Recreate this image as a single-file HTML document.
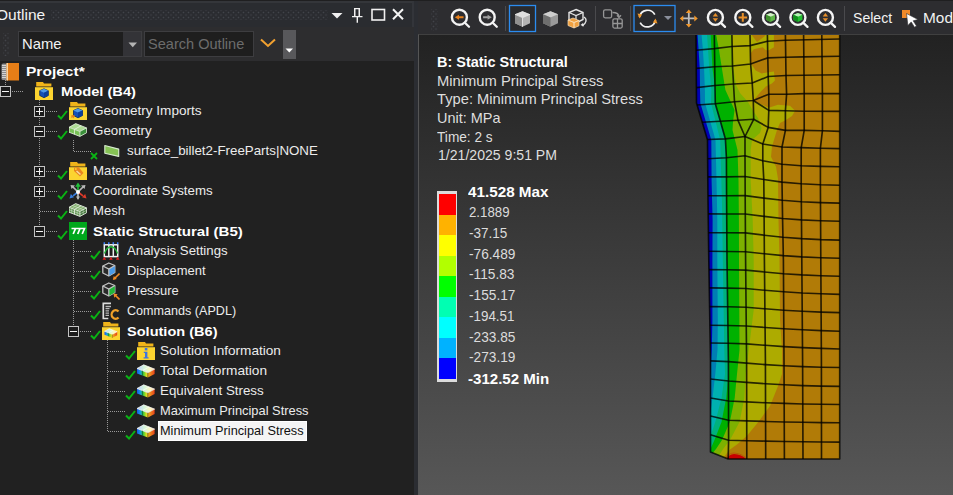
<!DOCTYPE html>
<html><head><meta charset="utf-8"><title>Mechanical</title>
<style>
*{box-sizing:border-box;margin:0;padding:0}
html,body{width:953px;height:495px;overflow:hidden;background:#2d2d30;font-family:"Liberation Sans",sans-serif;color:#f0f0f0}
#app{position:relative;width:953px;height:495px;overflow:hidden;background:#2d2d30}
.abs{position:absolute}
#topstrip{left:0;top:0;width:953px;height:1.500px;background:#1f1f20}
#ltitle{left:0;top:1px;width:414px;height:26px;background:#2a2c30;border-right:2px solid #33353a;border-top:2.500px solid #34363a}
#lfilter{left:0;top:27px;width:414px;height:34px;background:#2d2d2f}
#tree{left:0;top:61px;width:414px;height:434px;background:#212121}
#split{left:414px;top:1px;width:4px;height:493px;background:#2b2d32}
#toolbar{left:418px;top:1px;width:535px;height:33px;background:#2d2d30}
#view{left:418px;top:34px;width:535px;height:461px;background:linear-gradient(#222222,#575757);border-left:1px solid #555555;border-top:1px solid #404040}
.grip{background-image:radial-gradient(circle,#42444a 0.7px,transparent 1.1px),radial-gradient(circle,#42444a 0.7px,transparent 1.1px);background-size:5px 5px;background-position:0 0,2.500px 2.500px}
#outl{left:-3px;top:6px;font-size:13.500px;color:#f2f2f2;letter-spacing:0.100px}
.combo{position:absolute;top:31px;height:26px;background:#1e1e1e;border:1px solid #3d3d40}
.vd{position:absolute;width:1px;background-image:linear-gradient(#9a9a9a 50%,transparent 50%);background-size:1px 2px}
.hd{position:absolute;height:1px;background-image:linear-gradient(90deg,#9a9a9a 50%,transparent 50%);background-size:2px 1px}
.exp{position:absolute;width:11px;height:11px;border:1px solid #c4c4c4;background:#1b1b1b}
.exp i{position:absolute;left:1px;top:4px;width:7px;height:1px;background:#f4f4f4}
.exp b{position:absolute;left:4px;top:1px;width:1px;height:7px;background:#f4f4f4}
.chk{position:absolute}
.ico{position:absolute;width:19px;height:19px}
.t{position:absolute;height:20px;line-height:20px;font-size:13px;color:#ececec;white-space:nowrap;transform-origin:0 50%}
.t.b{font-weight:bold;color:#ffffff}
.t.sel{color:#101010}
.selbox{position:absolute;background:#f4f4f4;border:1px solid #ffffff}
.lg{position:absolute;left:438px;font-size:13px;white-space:nowrap;color:#ebebeb;line-height:16px}
.lgbar{position:absolute;left:437px;top:191.400px;width:19.500px;height:190.500px;background:#dcdcdc;padding:3px 1px 3px 1.500px}
.lgbar i{display:block;width:17px;height:20.500px}
.lt{position:absolute;left:468px;font-size:12.500px;color:#e8e8e8;white-space:nowrap;line-height:16px}
.lt.b{font-weight:bold;color:#ffffff;font-size:13px}
.tb{position:absolute;top:0;left:0}
.tx{position:absolute;height:20px;line-height:20px;white-space:nowrap;transform-origin:0 50%}
</style></head><body><div id="app">
<div id="topstrip" class="abs"></div>
<div id="ltitle" class="abs"></div>
<div id="lfilter" class="abs"></div>
<div id="tree" class="abs"></div>
<div id="split" class="abs"></div>
<div id="toolbar" class="abs"></div>
<div id="view" class="abs"></div>

<!-- left title -->
<div class="abs grip" style="left:51px;top:10px;width:277px;height:10px"></div>
<svg class="abs" style="left:328px;top:4px" width="84" height="22" viewBox="0 0 84 22">
 <path d="M3.500 9h11l-5.500 5.500z" fill="#f0f0f0"/>
 <path d="M26 4h6v8h2.500v1.300h-4.500v5.500h-1.400v-5.500h-4.600v-1.300h2z M27.500 5.300v6.700h3v-6.700z" fill="#f0f0f0" fill-rule="evenodd"/>
 <rect x="44" y="5.500" width="12.500" height="10.500" fill="none" stroke="#f0f0f0" stroke-width="1.600"/>
 <path d="M65 5.200l10 10M75 5.200l-10 10" stroke="#f4f4f4" stroke-width="2" fill="none"/>
</svg>

<!-- filter row -->
<div class="abs grip" style="left:3px;top:33px;width:6px;height:23px"></div>
<div class="combo" style="left:18px;width:124px"><div class="abs" style="right:0;top:0;width:18px;height:24px;background:#333337"></div></div>
<svg class="abs" style="left:128px;top:41.500px" width="10" height="6"><path d="M0.500 0.500h8.500l-4.250 4.700z" fill="#b4b4b4"/></svg>
<div class="combo" style="left:144px;width:110px"></div>
<svg class="abs" style="left:259px;top:37px" width="20" height="12"><path d="M2 2.500l7 6.500 7-6.500" fill="none" stroke="#f2a130" stroke-width="2"/></svg>
<div class="abs" style="left:283px;top:30px;width:13px;height:29px;background:#58585b"></div>
<svg class="abs" style="left:285px;top:48px" width="9" height="5"><path d="M0.500 0.500h7.500l-3.750 4z" fill="#ffffff"/></svg>

<!-- tree -->
<div class="vd" style="left:5px;top:80px;height:6px"></div>
<div class="vd" style="left:39px;top:100px;height:126px"></div>
<div class="vd" style="left:73px;top:140px;height:11px"></div>
<div class="vd" style="left:73px;top:240px;height:86px"></div>
<div class="vd" style="left:107px;top:340px;height:91px"></div>
<div class="ico" style="left:0.5px;top:62px"><svg width="19" height="19" viewBox="0 0 19 19"><rect x="0.500" y="1.500" width="5.500" height="16.500" rx="1.500" fill="#8c8c8c"/><path d="M1 3.500h4M1 5.500h4M1 7.500h4M1 9.500h4M1 11.500h4M1 13.500h4M1 15.500h4" stroke="#dcdcdc" stroke-width="0.900"/><rect x="5.500" y="1" width="12.500" height="17.500" fill="#e67e17"/><rect x="5.500" y="1" width="1.400" height="17.500" fill="#f7dcb4"/></svg></div>
<div class="tx " style="left:26.00px;top:61.50px;font-size:13px;color:#ffffff;transform:scaleX(1.1945);font-weight:bold">Project*</div>
<div class="exp" style="left:0px;top:86px"><i></i></div>
<div class="hd" style="left:12px;top:91px;width:12px"></div>
<div class="ico" style="left:34.8px;top:82px"><svg width="18" height="18" viewBox="0 0 18 18"><path d="M1.200 0h6.800l1 1.400h7.400v3.200h-15.200z" fill="#f0b41a"/><path d="M0 5.200h18v12.800h-18z" fill="#fcd430"/><path d="M9 6.800l4.300 1.900v4.800l-4.300 2.200-4.300-2.200v-4.800z" fill="#1550b8" stroke="#0a2a5a" stroke-width="0.800"/><path d="M9 6.800l4.300 1.900-4.300 2-4.300-2z" fill="#4e9ae8"/><path d="M9 10.700v5l4.300-2.200v-4.800z" fill="#0c3f9a"/></svg></div>
<div class="tx " style="left:60.50px;top:81.50px;font-size:13px;color:#ffffff;transform:scaleX(1.1286);font-weight:bold">Model (B4)</div>
<div class="exp" style="left:34px;top:106px"><i></i><b></b></div>
<div class="hd" style="left:46px;top:111px;width:12px"></div>
<svg class="chk" style="left:56.8px;top:110px" width="11" height="10" viewBox="0 0 11 10"><path d="M1 5.500l3 3 6-7.500" fill="none" stroke="#0ab414" stroke-width="2"/></svg>
<div class="ico" style="left:68.8px;top:102px"><svg width="18" height="18" viewBox="0 0 18 18"><path d="M1.200 0h6.800l1 1.400h7.400v3.200h-15.200z" fill="#f0b41a"/><path d="M0 5.200h18v12.800h-18z" fill="#fcd430"/><path d="M9 6.500l4.500 2v5l-4.500 2.300-4.500-2.300v-5z" fill="#1550b8" stroke="#0a2a5a" stroke-width="0.800"/><path d="M9 6.500l4.500 2-4.500 2.100-4.500-2.100z" fill="#4e9ae8"/><path d="M9 10.600v5.200l4.500-2.300v-5z" fill="#0c3f9a"/><path d="M2.500 13l3.500.500-1.500 3-.800-1.300-1.500.800z" fill="#e8841a"/></svg></div>
<div class="tx " style="left:93.00px;top:101.40px;font-size:13px;color:#ececec;transform:scaleX(1.0439)">Geometry Imports</div>
<div class="exp" style="left:34px;top:126px"><i></i></div>
<div class="hd" style="left:46px;top:131px;width:12px"></div>
<svg class="chk" style="left:56.8px;top:130px" width="11" height="10" viewBox="0 0 11 10"><path d="M1 5.500l3 3 6-7.500" fill="none" stroke="#0ab414" stroke-width="2"/></svg>
<div class="ico" style="left:68.8px;top:122px"><svg width="18" height="18" viewBox="0 0 18 18"><path d="M0 5.300l6.700-3.700 10.900 4.300-6.700 3.600z" fill="#addc94"/><path d="M0 5.300l10.900 4.200v4.900l-10.900-4.200z" fill="#78c256"/><path d="M10.900 9.500l6.700-3.600v4.900l-6.700 3.600z" fill="#3a8f3a"/><path d="M0 5.300l6.700-3.700 10.900 4.300-6.700 3.600zM0 5.300v4.900l10.900 4.200 6.700-3.600v-4.900M10.900 9.500v4.900M5.450 7.400l6.700-3.650M5.450 7.400v4.900" fill="none" stroke="#ecf7e6" stroke-width="0.8" stroke-linejoin="round"/></svg></div>
<div class="tx " style="left:93.00px;top:121.40px;font-size:13px;color:#ececec;transform:scaleX(1.0284)">Geometry</div>
<div class="hd" style="left:74px;top:151px;width:18px"></div>
<svg class="chk" style="left:90.4px;top:152px" width="9" height="9" viewBox="0 0 9 9"><path d="M1 1l6 6M7 1l-6 6" fill="none" stroke="#0ab414" stroke-width="1.800"/></svg>
<div class="ico" style="left:102.4px;top:142px"><svg width="18" height="18" viewBox="0 0 18 18"><path d="M2.800 3.500l13.900 3.600v7.300l-13.900-3.100z" fill="#86c255" stroke="#d7ead0" stroke-width="1.100" stroke-linejoin="round"/></svg></div>
<div class="tx " style="left:127.00px;top:141.40px;font-size:13px;color:#ececec;transform:scaleX(1.0254)">surface_billet2-FreeParts|NONE</div>
<div class="exp" style="left:34px;top:166px"><i></i><b></b></div>
<div class="hd" style="left:46px;top:171px;width:12px"></div>
<svg class="chk" style="left:56.8px;top:170px" width="11" height="10" viewBox="0 0 11 10"><path d="M1 5.500l3 3 6-7.500" fill="none" stroke="#0ab414" stroke-width="2"/></svg>
<div class="ico" style="left:68.8px;top:162px"><svg width="18" height="18" viewBox="0 0 18 18"><path d="M1.200 0h6.800l1 1.400h7.400v3.200h-15.200z" fill="#f0b41a"/><path d="M0 5.200h18v12.800h-18z" fill="#fcd430"/><path d="M5 5.500l4.500-.5 5 6-3.500 3.500-6-5.500z" fill="#e8871e"/><path d="M7.500 9l4 3.500" stroke="#f9d9a0" stroke-width="1.600"/><circle cx="6.800" cy="7" r="1" fill="#fbd12c"/></svg></div>
<div class="tx " style="left:93.00px;top:161.40px;font-size:13px;color:#ececec;transform:scaleX(1.0180)">Materials</div>
<div class="exp" style="left:34px;top:186px"><i></i><b></b></div>
<div class="hd" style="left:46px;top:191px;width:12px"></div>
<svg class="chk" style="left:56.8px;top:190px" width="11" height="10" viewBox="0 0 11 10"><path d="M1 5.500l3 3 6-7.500" fill="none" stroke="#0ab414" stroke-width="2"/></svg>
<div class="ico" style="left:68.8px;top:182px"><svg width="18" height="18" viewBox="0 0 18 18"><path d="M9 10L3.500 4.500M9 10l5.500-5.500M9 10v6.500" stroke="#b8b8b8" stroke-width="1.700"/><path d="M1.500 3l4.500.500-3.500 3.500zM16.500 3l-4.500.500 3.500 3.500zM9 18l-2-3.500h4z" fill="#b8b8b8"/><path d="M9 10V4" stroke="#22c23a" stroke-width="1.600"/><path d="M9 0.500l2.800 4.200h-5.600z" fill="#22c23a"/><path d="M9 10l-5 3.800" stroke="#3a7fe0" stroke-width="1.600"/><path d="M0.500 16.500l1.300-4.500 3.200 3.300z" fill="#3a7fe0"/><path d="M9 10l5 3.800" stroke="#e03a2a" stroke-width="1.600"/><path d="M17.500 16.500l-1.300-4.500-3.200 3.300z" fill="#e03a2a"/><circle cx="9" cy="10" r="2" fill="#ffffff"/></svg></div>
<div class="tx " style="left:93.00px;top:181.40px;font-size:13px;color:#ececec;transform:scaleX(1.0217)">Coordinate Systems</div>
<div class="hd" style="left:40px;top:211px;width:18px"></div>
<svg class="chk" style="left:56.8px;top:210px" width="11" height="10" viewBox="0 0 11 10"><path d="M1 5.500l3 3 6-7.500" fill="none" stroke="#0ab414" stroke-width="2"/></svg>
<div class="ico" style="left:68.8px;top:202px"><svg width="18" height="18" viewBox="0 0 18 18"><path d="M0 5.300l6.700-3.700 10.900 4.300-6.700 3.600z" fill="#7fae6a"/><path d="M0 5.300l10.900 4.200v4.900l-10.900-4.200z" fill="#5f9450"/><path d="M10.900 9.500l6.700-3.600v4.900l-6.700 3.600z" fill="#3f7338"/><path d="M0 5.300l6.700-3.700 10.900 4.300-6.700 3.600zM0 5.300v4.900l10.900 4.200 6.700-3.600v-4.900M10.900 9.500v4.900M5.450 7.400l6.700-3.650M5.450 7.400v4.900" fill="none" stroke="#e6efe2" stroke-width="0.9" stroke-linejoin="round"/><path d="M2.700 6.400l6.700-3.700M8.200 8.500l6.700-3.700M3.300 3.500l10.900 4.200M0 7.700l10.900 4.200 6.700-3.600M2.700 6.400v4.900M8.200 8.500v4.900M14.200 7.700v4.900" stroke="#dbe8d4" stroke-width="0.500" fill="none"/></svg></div>
<div class="tx " style="left:93.00px;top:201.40px;font-size:13px;color:#ececec;transform:scaleX(1.0064)">Mesh</div>
<div class="exp" style="left:34px;top:226px"><i></i></div>
<div class="hd" style="left:46px;top:231px;width:12px"></div>
<svg class="chk" style="left:56.8px;top:230px" width="11" height="10" viewBox="0 0 11 10"><path d="M1 5.500l3 3 6-7.500" fill="none" stroke="#0ab414" stroke-width="2"/></svg>
<div class="ico" style="left:68.8px;top:222px"><svg width="18" height="18" viewBox="0 0 18 18"><rect x="0" y="0" width="18" height="18" fill="#00a81c"/><path d="M2.500 6.500h4l-2.300 5.500M7 6.500h4l-2.300 5.500M11.500 6.500h4l-2.300 5.500" stroke="#fff" stroke-width="1.700" fill="none"/></svg></div>
<div class="tx " style="left:93.00px;top:221.50px;font-size:13px;color:#ffffff;transform:scaleX(1.1592);font-weight:bold">Static Structural (B5)</div>
<div class="hd" style="left:74px;top:251px;width:18px"></div>
<svg class="chk" style="left:90.4px;top:250px" width="11" height="10" viewBox="0 0 11 10"><path d="M1 5.500l3 3 6-7.500" fill="none" stroke="#0ab414" stroke-width="2"/></svg>
<div class="ico" style="left:102.4px;top:242px"><svg width="18" height="18" viewBox="0 0 18 18"><rect x="2.300" y="2.800" width="13.400" height="11.800" fill="#1c1c1c" stroke="#f0f0f0" stroke-width="1.500"/><path d="M6.800 2.800v11.800M11.300 2.800v11.800" stroke="#f0f0f0" stroke-width="1.500"/><path d="M2.500 11.500c3-9 10-9 13 0" fill="none" stroke="#22b83a" stroke-width="1.300"/><path d="M2.300 0.300v2M6.800 0.300v2M11.300 0.300v2M15.700 0.300v2" stroke="#3a7fff" stroke-width="1.500"/><path d="M2.300 14.800l-1.800 3h3.600zM9 14.800l-1.800 3h3.600zM15.700 14.800l-1.800 3h3.600z" fill="#e02020"/></svg></div>
<div class="tx " style="left:127.00px;top:241.40px;font-size:13px;color:#ececec;transform:scaleX(1.0162)">Analysis Settings</div>
<div class="hd" style="left:74px;top:271px;width:18px"></div>
<svg class="chk" style="left:90.4px;top:270px" width="11" height="10" viewBox="0 0 11 10"><path d="M1 5.500l3 3 6-7.500" fill="none" stroke="#0ab414" stroke-width="2"/></svg>
<div class="ico" style="left:102.4px;top:262px"><svg width="18" height="18" viewBox="0 0 18 18"><path d="M0.800 4l6-3 6 2.500v7l-6 3.500-6-3z" fill="#2a2a2a" stroke="#c4c4c4" stroke-width="1.300" stroke-linejoin="round"/><path d="M6.800 7v7l6-3.500v-7z" fill="#4a9ae8"/><path d="M0.800 4l6 3 6-3.500M6.800 7v7" fill="none" stroke="#c4c4c4" stroke-width="1.200"/><path d="M17.500 11.500l-5.500 5.500" stroke="#f08a24" stroke-width="1.600"/><path d="M10.800 18l1-4 3 3z" fill="#f08a24"/></svg></div>
<div class="tx " style="left:127.00px;top:261.40px;font-size:13px;color:#ececec;transform:scaleX(0.9979)">Displacement</div>
<div class="hd" style="left:74px;top:291px;width:18px"></div>
<svg class="chk" style="left:90.4px;top:290px" width="11" height="10" viewBox="0 0 11 10"><path d="M1 5.500l3 3 6-7.500" fill="none" stroke="#0ab414" stroke-width="2"/></svg>
<div class="ico" style="left:102.4px;top:282px"><svg width="18" height="18" viewBox="0 0 18 18"><path d="M0.800 4l6-3 6 2.500v7l-6 3.500-6-3z" fill="#2a2a2a" stroke="#c4c4c4" stroke-width="1.300" stroke-linejoin="round"/><path d="M6.800 7v7l6-3.500v-7z" fill="#22b83a"/><path d="M0.800 4l6 3 6-3.500M6.800 7v7" fill="none" stroke="#c4c4c4" stroke-width="1.200"/><path d="M17.500 17.500l-4.500-4.500" stroke="#f08a24" stroke-width="1.600"/><path d="M11.500 11.500l4.200.800-3.400 3.400z" fill="#f08a24"/></svg></div>
<div class="tx " style="left:127.00px;top:281.40px;font-size:13px;color:#ececec;transform:scaleX(0.9936)">Pressure</div>
<div class="hd" style="left:74px;top:311px;width:18px"></div>
<svg class="chk" style="left:90.4px;top:310px" width="11" height="10" viewBox="0 0 11 10"><path d="M1 5.500l3 3 6-7.500" fill="none" stroke="#0ab414" stroke-width="2"/></svg>
<div class="ico" style="left:102.4px;top:302px"><svg width="18" height="18" viewBox="0 0 18 18"><path d="M9 1.300h-7.700v15.200h5" fill="none" stroke="#dcdcdc" stroke-width="1.700"/><path d="M3.500 4.500h5.500M3.500 6.700h4M3.500 8.900h3.500M3.500 11.100h3.500M3.500 13.300h3.500" stroke="#b8b8b8" stroke-width="1.300"/><path d="M16.500 9.500a4 4.300 0 1 0 0 6" fill="none" stroke="#f0a028" stroke-width="2.300"/></svg></div>
<div class="tx " style="left:127.00px;top:301.40px;font-size:13px;color:#ececec;transform:scaleX(0.9680)">Commands (APDL)</div>
<div class="exp" style="left:68px;top:326px"><i></i></div>
<div class="hd" style="left:80px;top:331px;width:12px"></div>
<svg class="chk" style="left:90.4px;top:330px" width="11" height="10" viewBox="0 0 11 10"><path d="M1 5.500l3 3 6-7.500" fill="none" stroke="#0ab414" stroke-width="2"/></svg>
<div class="ico" style="left:102.4px;top:322px"><svg width="18" height="18" viewBox="0 0 18 18"><path d="M1.200 0h6.800l1 1.400h7.400v3.200h-15.200z" fill="#f0b41a"/><path d="M0 5.200h18v12.800h-18z" fill="#fcd430"/><g transform="translate(2.500,5.500) scale(0.72)"><defs><linearGradient id="rg" x1="0" x2="1" y1="0" y2="0"><stop offset="0" stop-color="#1a4fe8"/><stop offset="0.300" stop-color="#12a0e8"/><stop offset="0.550" stop-color="#2cc83a"/><stop offset="0.850" stop-color="#d8e020"/><stop offset="1" stop-color="#f0d020"/></linearGradient><linearGradient id="rg2" x1="0" x2="1" y1="0" y2="0"><stop offset="0" stop-color="#f0b020"/><stop offset="1" stop-color="#e8401a"/></linearGradient><linearGradient id="rg3" x1="0" x2="1" y1="0" y2="0"><stop offset="0" stop-color="#b8d0ff"/><stop offset="0.450" stop-color="#d8f8d8"/><stop offset="0.750" stop-color="#fff8c0"/><stop offset="1" stop-color="#ffd0a8"/></linearGradient></defs><path d="M0 5.300l10.900 4.200v4.900l-10.900-4.200z" fill="url(#rg)"/><path d="M10.900 9.500l6.700-3.600v4.900l-6.700 3.600z" fill="url(#rg2)"/><path d="M0 5.300l6.700-3.700 10.900 4.300-6.700 3.600z" fill="url(#rg3)"/><path d="M0 5.300l6.700-3.700 10.900 4.300-6.700 3.600zM5.450 7.400l6.700-3.650" fill="none" stroke="#ffffff" stroke-width="0.700"/><path d="M10.900 9.500v4.900M5.450 7.400v4.900" stroke="#101010" stroke-opacity="0.600" stroke-width="0.700"/></g></svg></div>
<div class="tx " style="left:127.00px;top:321.50px;font-size:13px;color:#ffffff;transform:scaleX(1.1188);font-weight:bold">Solution (B6)</div>
<div class="hd" style="left:108px;top:351px;width:18px"></div>
<svg class="chk" style="left:124.6px;top:350px" width="11" height="10" viewBox="0 0 11 10"><path d="M1 5.500l3 3 6-7.500" fill="none" stroke="#0ab414" stroke-width="2"/></svg>
<div class="ico" style="left:136.6px;top:342px"><svg width="18" height="18" viewBox="0 0 18 18"><path d="M1.200 0h6.800l1 1.400h7.400v3.200h-15.200z" fill="#f0b41a"/><path d="M0 5.200h18v12.800h-18z" fill="#fcd430"/><rect x="7.800" y="6" width="2.600" height="2.400" fill="#3f74e0"/><path d="M6.800 9.800h3.600v5.500h1.200v1.200h-5v-1.200h1.400v-4.300h-1.200z" fill="#3f74e0"/></svg></div>
<div class="tx " style="left:160.30px;top:341.40px;font-size:13px;color:#ececec;transform:scaleX(1.0456)">Solution Information</div>
<div class="hd" style="left:108px;top:371px;width:18px"></div>
<svg class="chk" style="left:124.6px;top:370px" width="11" height="10" viewBox="0 0 11 10"><path d="M1 5.500l3 3 6-7.500" fill="none" stroke="#0ab414" stroke-width="2"/></svg>
<div class="ico" style="left:136.6px;top:362px"><svg width="18" height="18" viewBox="0 0 18 18"><g transform="translate(0,1.200)"><defs><linearGradient id="rg" x1="0" x2="1" y1="0" y2="0"><stop offset="0" stop-color="#1a4fe8"/><stop offset="0.300" stop-color="#12a0e8"/><stop offset="0.550" stop-color="#2cc83a"/><stop offset="0.850" stop-color="#d8e020"/><stop offset="1" stop-color="#f0d020"/></linearGradient><linearGradient id="rg2" x1="0" x2="1" y1="0" y2="0"><stop offset="0" stop-color="#f0b020"/><stop offset="1" stop-color="#e8401a"/></linearGradient><linearGradient id="rg3" x1="0" x2="1" y1="0" y2="0"><stop offset="0" stop-color="#b8d0ff"/><stop offset="0.450" stop-color="#d8f8d8"/><stop offset="0.750" stop-color="#fff8c0"/><stop offset="1" stop-color="#ffd0a8"/></linearGradient></defs><path d="M0 5.300l10.900 4.200v4.900l-10.900-4.200z" fill="url(#rg)"/><path d="M10.900 9.500l6.700-3.600v4.900l-6.700 3.600z" fill="url(#rg2)"/><path d="M0 5.300l6.700-3.700 10.900 4.300-6.700 3.600z" fill="url(#rg3)"/><path d="M0 5.300l6.700-3.700 10.900 4.300-6.700 3.600zM5.450 7.400l6.700-3.650" fill="none" stroke="#ffffff" stroke-width="0.700"/><path d="M10.900 9.500v4.900M5.450 7.400v4.900" stroke="#101010" stroke-opacity="0.600" stroke-width="0.700"/></g></svg></div>
<div class="tx " style="left:160.30px;top:361.40px;font-size:13px;color:#ececec;transform:scaleX(1.0501)">Total Deformation</div>
<div class="hd" style="left:108px;top:391px;width:18px"></div>
<svg class="chk" style="left:124.6px;top:390px" width="11" height="10" viewBox="0 0 11 10"><path d="M1 5.500l3 3 6-7.500" fill="none" stroke="#0ab414" stroke-width="2"/></svg>
<div class="ico" style="left:136.6px;top:382px"><svg width="18" height="18" viewBox="0 0 18 18"><g transform="translate(0,1.200)"><defs><linearGradient id="rg" x1="0" x2="1" y1="0" y2="0"><stop offset="0" stop-color="#1a4fe8"/><stop offset="0.300" stop-color="#12a0e8"/><stop offset="0.550" stop-color="#2cc83a"/><stop offset="0.850" stop-color="#d8e020"/><stop offset="1" stop-color="#f0d020"/></linearGradient><linearGradient id="rg2" x1="0" x2="1" y1="0" y2="0"><stop offset="0" stop-color="#f0b020"/><stop offset="1" stop-color="#e8401a"/></linearGradient><linearGradient id="rg3" x1="0" x2="1" y1="0" y2="0"><stop offset="0" stop-color="#b8d0ff"/><stop offset="0.450" stop-color="#d8f8d8"/><stop offset="0.750" stop-color="#fff8c0"/><stop offset="1" stop-color="#ffd0a8"/></linearGradient></defs><path d="M0 5.300l10.900 4.200v4.900l-10.900-4.200z" fill="url(#rg)"/><path d="M10.900 9.500l6.700-3.600v4.900l-6.700 3.600z" fill="url(#rg2)"/><path d="M0 5.300l6.700-3.700 10.900 4.300-6.700 3.600z" fill="url(#rg3)"/><path d="M0 5.300l6.700-3.700 10.900 4.300-6.700 3.600zM5.450 7.400l6.700-3.650" fill="none" stroke="#ffffff" stroke-width="0.700"/><path d="M10.900 9.500v4.900M5.450 7.400v4.900" stroke="#101010" stroke-opacity="0.600" stroke-width="0.700"/></g></svg></div>
<div class="tx " style="left:160.30px;top:381.40px;font-size:13px;color:#ececec;transform:scaleX(1.0250)">Equivalent Stress</div>
<div class="hd" style="left:108px;top:411px;width:18px"></div>
<svg class="chk" style="left:124.6px;top:410px" width="11" height="10" viewBox="0 0 11 10"><path d="M1 5.500l3 3 6-7.500" fill="none" stroke="#0ab414" stroke-width="2"/></svg>
<div class="ico" style="left:136.6px;top:402px"><svg width="18" height="18" viewBox="0 0 18 18"><g transform="translate(0,1.200)"><defs><linearGradient id="rg" x1="0" x2="1" y1="0" y2="0"><stop offset="0" stop-color="#1a4fe8"/><stop offset="0.300" stop-color="#12a0e8"/><stop offset="0.550" stop-color="#2cc83a"/><stop offset="0.850" stop-color="#d8e020"/><stop offset="1" stop-color="#f0d020"/></linearGradient><linearGradient id="rg2" x1="0" x2="1" y1="0" y2="0"><stop offset="0" stop-color="#f0b020"/><stop offset="1" stop-color="#e8401a"/></linearGradient><linearGradient id="rg3" x1="0" x2="1" y1="0" y2="0"><stop offset="0" stop-color="#b8d0ff"/><stop offset="0.450" stop-color="#d8f8d8"/><stop offset="0.750" stop-color="#fff8c0"/><stop offset="1" stop-color="#ffd0a8"/></linearGradient></defs><path d="M0 5.300l10.900 4.200v4.900l-10.900-4.200z" fill="url(#rg)"/><path d="M10.900 9.500l6.700-3.600v4.900l-6.700 3.600z" fill="url(#rg2)"/><path d="M0 5.300l6.700-3.700 10.900 4.300-6.700 3.600z" fill="url(#rg3)"/><path d="M0 5.300l6.700-3.700 10.900 4.300-6.700 3.600zM5.450 7.400l6.700-3.650" fill="none" stroke="#ffffff" stroke-width="0.700"/><path d="M10.900 9.500v4.900M5.450 7.400v4.900" stroke="#101010" stroke-opacity="0.600" stroke-width="0.700"/></g></svg></div>
<div class="tx " style="left:160.30px;top:401.40px;font-size:13px;color:#ececec;transform:scaleX(0.9882)">Maximum Principal Stress</div>
<div class="hd" style="left:108px;top:431px;width:18px"></div>
<svg class="chk" style="left:124.6px;top:430px" width="11" height="10" viewBox="0 0 11 10"><path d="M1 5.500l3 3 6-7.500" fill="none" stroke="#0ab414" stroke-width="2"/></svg>
<div class="ico" style="left:136.6px;top:422px"><svg width="18" height="18" viewBox="0 0 18 18"><g transform="translate(0,1.200)"><defs><linearGradient id="rg" x1="0" x2="1" y1="0" y2="0"><stop offset="0" stop-color="#1a4fe8"/><stop offset="0.300" stop-color="#12a0e8"/><stop offset="0.550" stop-color="#2cc83a"/><stop offset="0.850" stop-color="#d8e020"/><stop offset="1" stop-color="#f0d020"/></linearGradient><linearGradient id="rg2" x1="0" x2="1" y1="0" y2="0"><stop offset="0" stop-color="#f0b020"/><stop offset="1" stop-color="#e8401a"/></linearGradient><linearGradient id="rg3" x1="0" x2="1" y1="0" y2="0"><stop offset="0" stop-color="#b8d0ff"/><stop offset="0.450" stop-color="#d8f8d8"/><stop offset="0.750" stop-color="#fff8c0"/><stop offset="1" stop-color="#ffd0a8"/></linearGradient></defs><path d="M0 5.300l10.900 4.200v4.900l-10.900-4.200z" fill="url(#rg)"/><path d="M10.900 9.500l6.700-3.600v4.900l-6.700 3.600z" fill="url(#rg2)"/><path d="M0 5.300l6.700-3.700 10.900 4.300-6.700 3.600z" fill="url(#rg3)"/><path d="M0 5.300l6.700-3.700 10.900 4.300-6.700 3.600zM5.450 7.400l6.700-3.650" fill="none" stroke="#ffffff" stroke-width="0.700"/><path d="M10.900 9.500v4.900M5.450 7.400v4.900" stroke="#101010" stroke-opacity="0.600" stroke-width="0.700"/></g></svg></div>
<div class="selbox" style="left:158px;top:421px;width:149px;height:20px"></div>
<div class="tx " style="left:160.30px;top:421.40px;font-size:13px;color:#101010;transform:scaleX(0.9785)">Minimum Principal Stress</div>

<!-- toolbar -->
<div class="abs grip" style="left:431px;top:9px;width:7px;height:22px"></div>
<svg class="tb" width="953" height="36" viewBox="0 0 953 36">
 <!-- zoom prev / next -->
 <g transform="translate(459.400,17.200)"><circle cx="0" cy="0" r="7.500" fill="none" stroke="#f4f4f4" stroke-width="2.400"/><path d="M6 6l3.600 3.500" stroke="#f4f4f4" stroke-width="2.300" stroke-linecap="round"/></g><path d="M454.800 17.200l4.200-2.500v1.500h4.500v2h-4.500v1.500z" fill="#e8801a"/>
 <g transform="translate(487.200,17.200)"><circle cx="0" cy="0" r="7.500" fill="none" stroke="#f4f4f4" stroke-width="2.400"/><path d="M6 6l3.600 3.500" stroke="#f4f4f4" stroke-width="2.300" stroke-linecap="round"/></g><path d="M491.800 17.200l-4.200-2.500v1.500h-4.500v2h4.500v1.500z" fill="#a0a0a0"/>
 <path d="M505.500 6v25" stroke="#4a4a4d" stroke-width="1"/>
 <!-- selected cube -->
 <rect x="509.500" y="5.500" width="26" height="26" fill="#292a2d" stroke="#2b8cf0" stroke-width="1.300"/>
 <g transform="translate(515,11.300)"><path d="M7.500 0l7.500 3v9l-7.500 3.500-7.500-3.500v-9z" fill="#b4b4b4"/><path d="M7.500 0l7.500 3-7.500 3.300-7.500-3.300z" fill="#dedede"/><path d="M7.500 6.300v9.200l-7.500-3.500v-9z" fill="#909090"/><path d="M0 3l7.500 3.300 7.500-3.300M7.500 6.300v9.200" stroke="#ececec" stroke-width="0.800" fill="none"/></g>
 <g transform="translate(543,11.300)"><path d="M7.500 0l7.500 3v9l-7.500 3.500-7.500-3.500v-9z" fill="#9a9a9a"/><path d="M7.500 0l7.500 3-7.500 3.300-7.500-3.300z" fill="#cfcfcf"/><path d="M7.500 6.300v9.200l-7.500-3.500v-9z" fill="#6e6e6e"/></g>
 <!-- rotate cube -->
 <g transform="translate(567,8)"><path d="M9 1.500l7 3v7l-7 3.500-7-3.500v-7z" fill="none" stroke="#e4e4e4" stroke-width="1.400"/><path d="M2 4.500l7 3 7-3M9 7.500v7" fill="none" stroke="#e4e4e4" stroke-width="1.200"/><path d="M1 12l6 2.500v5.500l-6-2.500z M7 14.500l5-2v5.300l-5 2.200z M1 12l5-2 6 2.500-5 2z" fill="#f0a040" stroke="#fbe0b8" stroke-width="0.700"/><path d="M17 9c3 2 3 6-2 9" fill="none" stroke="#e4e4e4" stroke-width="1.300"/><path d="M13.500 17l3.500 1.500-1-3.500z" fill="#e4e4e4"/></g>
 <path d="M595.500 6v25" stroke="#4a4a4d" stroke-width="1"/>
 <!-- squares -->
 <g transform="translate(603,9)" fill="none" stroke="#969696" stroke-width="1.300"><rect x="0.600" y="0.800" width="8" height="8" rx="1.500"/><rect x="9.900" y="9.800" width="9.300" height="9.300" rx="1.500"/><path d="M14.500 9.800v9.300M9.900 14.500h9.300"/><path d="M9.500 3.500c4 0 6.500 1.500 6.500 4.500"/><path d="M14 6.300l2 2.200 2-2.200" /></g>
 <path d="M630.500 6v25" stroke="#4a4a4d" stroke-width="1"/>
 <!-- rotate selected -->
 <rect x="634" y="5.500" width="41" height="26" fill="#292a2d" stroke="#2b8cf0" stroke-width="1.300"/>
 <g transform="translate(647.500,18.600)" fill="none"><path d="M-8 -1.500a8.200 8.200 0 0 1 15.300 -2.500" stroke="#f2f2f2" stroke-width="1.700"/><path d="M8 1.500a8.200 8.200 0 0 1 -15.300 2.500" stroke="#f2f2f2" stroke-width="1.700"/><path d="M-10 -5l4.600 1-2.600 4z" fill="#f09a2e"/><path d="M10 5l-4.600-1 2.600-4z" fill="#f09a2e"/></g>
 <path d="M664 16h8l-4 4z" fill="#8a8f9c"/>
 <!-- pan -->
 <g transform="translate(688.800,18.400)"><path d="M-6 0h12M0 -6v12" stroke="#bdbdbd" stroke-width="1.800"/><path d="M-9 0l3.500-3v6zM9 0l-3.500-3v6zM0 -9l-3 3.500h6zM0 9l-3-3.500h6z" fill="#f0962a"/></g>
 <!-- zoom group -->
 <g transform="translate(715.400,17.400)"><circle cx="0" cy="0" r="7.500" fill="none" stroke="#f4f4f4" stroke-width="2.400"/><path d="M6 6l3.600 3.500" stroke="#f4f4f4" stroke-width="2.300" stroke-linecap="round"/></g><path d="M715.400 13l-2.700 3.500h5.400zM715.400 21.800l-2.700-3.500h5.400z" fill="#e8902a"/>
 <g transform="translate(742.800,17.400)"><circle cx="0" cy="0" r="7.500" fill="none" stroke="#f4f4f4" stroke-width="2.400"/><path d="M6 6l3.600 3.500" stroke="#f4f4f4" stroke-width="2.300" stroke-linecap="round"/></g><path d="M738.500 17.400h8.600M742.800 13.100v8.600" stroke="#e8902a" stroke-width="2"/>
 <g transform="translate(770.500,17.400)"><circle cx="0" cy="0" r="7.500" fill="none" stroke="#f4f4f4" stroke-width="2.400"/><path d="M6 6l3.600 3.500" stroke="#f4f4f4" stroke-width="2.300" stroke-linecap="round"/></g><g transform="translate(766,12.900)"><path d="M4.500 0l4.500 1.800v5l-4.500 2.200-4.500-2.200v-5z" fill="#5fb848"/><path d="M4.500 0l4.500 1.800-4.500 2-4.500-2z" fill="#d5efc9"/><path d="M4.500 3.800v5.200l-4.500-2.200v-5z" fill="#3f8f2c"/></g>
 <g transform="translate(797.900,17.400)"><circle cx="0" cy="0" r="7.500" fill="none" stroke="#f4f4f4" stroke-width="2.400"/><path d="M6 6l3.600 3.500" stroke="#f4f4f4" stroke-width="2.300" stroke-linecap="round"/></g><g transform="translate(793.400,12.900)"><path d="M4.500 0l4.500 1.800v5l-4.500 2.200-4.500-2.200v-5z" fill="#22c030"/><path d="M4.500 0l4.500 1.800-4.500 2-4.500-2z" fill="#b8f0b8"/><path d="M4.500 3.800v5.200l-4.500-2.200v-5z" fill="#10901c"/></g>
 <g transform="translate(825.400,17.400)"><circle cx="0" cy="0" r="7.500" fill="none" stroke="#f4f4f4" stroke-width="2.400"/><path d="M6 6l3.600 3.500" stroke="#f4f4f4" stroke-width="2.300" stroke-linecap="round"/></g><path d="M825.400 13l-2.700 3.500h5.400zM825.400 21.800l-2.700-3.500h5.400z" fill="#e8902a"/>
 <path d="M844.500 6v25" stroke="#4a4a4d" stroke-width="1"/>
 <!-- cursor -->
 <rect x="902" y="10" width="8" height="8" fill="#f08a2a"/>
 <path d="M906.500 13.500l11.500 6-4.800 1.300 3.300 5.200-2 1.200-3.300-5.300-3.300 3.600z" fill="#ffffff" stroke="#2d2d30" stroke-width="0.600"/>
</svg>

<!-- viewport content -->
<svg id="mesh" width="953" height="495" viewBox="0 0 953 495" style="position:absolute;left:0;top:0">
<defs><clipPath id="mc"><polygon points="696.0,34.0 696.5,103.0 707.5,140.0 708.0,200.0 708.8,260.0 710.5,360.0 710.5,452.0 728.2,459.0 839.7,459.0 839.7,34.0" fill="#000" /></clipPath><clipPath id="vp"><rect x="420" y="35" width="533" height="460"/></clipPath></defs>
<g clip-path="url(#vp)"><g clip-path="url(#mc)">
<rect x="690" y="30" width="160" height="440" fill="#0000b4"/>
<polygon points="697.5,34.0 698.6,50.0 699.8,69.0 700.0,90.0 700.3,103.0 711.3,140.0 711.6,181.0 712.6,220.0 712.4,260.0 712.4,320.0 711.8,350.0 710.5,372.0 708.5,380.0 700.0,470.0 841.7,470.0 841.7,34.0" fill="#007db4" />
<polygon points="701.5,34.0 702.9,50.0 704.1,69.0 704.9,90.0 705.0,103.0 715.5,140.0 716.5,181.0 717.3,220.0 717.3,260.0 717.8,320.0 717.5,350.0 715.3,374.0 712.5,398.0 710.5,412.0 708.5,420.0 700.0,470.0 841.7,470.0 841.7,34.0" fill="#00b1b1" />
<polygon points="707.0,34.0 709.3,69.0 711.4,90.0 711.0,103.0 720.2,140.0 721.0,168.0 722.0,204.0 722.8,260.0 724.3,350.0 725.0,374.0 721.5,398.0 715.3,422.0 710.5,436.0 708.5,442.0 700.0,470.0 841.7,470.0 841.7,34.0" fill="#00b17d" />
<polygon points="710.6,34.0 712.5,69.0 715.4,90.0 715.5,103.0 726.0,140.0 726.2,181.0 726.3,220.0 727.2,260.0 728.3,350.0 728.5,374.0 726.2,398.0 721.5,422.0 714.5,440.0 710.5,449.0 708.5,452.0 700.0,470.0 841.7,470.0 841.7,34.0" fill="#00b100" />
<polygon points="716.0,34.0 719.0,50.0 722.0,69.0 725.4,90.0 730.0,100.0 734.5,110.0 733.0,122.0 732.5,130.0 735.0,140.0 737.5,150.0 738.5,181.0 738.9,220.0 739.0,260.0 739.5,350.0 737.0,374.0 734.7,398.0 729.8,422.0 722.0,440.0 716.0,449.0 711.0,455.0 705.0,459.0 841.7,459.0 841.7,34.0" fill="#7db100" />
<polygon points="731.8,34.0 733.0,55.0 733.6,69.0 736.0,85.0 740.0,93.0 748.0,102.0 752.5,110.0 758.0,118.0 761.5,128.0 760.0,133.0 752.0,140.0 750.7,150.0 750.7,181.0 752.7,220.0 753.7,260.0 753.7,310.0 748.5,352.0 745.6,374.0 744.4,398.0 739.5,422.0 730.0,440.0 723.8,448.0 718.0,457.0 716.0,460.0 841.7,460.0 841.7,34.0" fill="#adab00" />
<polygon points="773.9,34.0 773.9,47.2 768.8,50.2 765.8,50.2 762.8,47.2 753.7,49.2 750.7,53.2 750.7,63.3 755.7,70.4 761.8,73.4 773.9,71.4 774.9,80.5 771.9,83.5 765.8,86.6 761.8,90.6 754.7,98.7 753.7,100.7 768.8,107.8 777.9,104.7 790.0,105.8 795.1,110.8 792.0,116.0 786.0,120.0 780.0,123.0 777.0,130.0 772.0,146.6 771.0,156.7 776.0,166.8 778.0,179.0 778.5,220.0 779.5,260.0 780.0,320.0 782.0,350.0 782.0,374.0 778.0,386.0 770.0,406.0 757.7,422.7 746.8,436.0 737.0,444.5 730.0,449.4 727.0,453.0 722.0,460.0 841.7,460.0 841.7,34.0" fill="#b17b07" />
<polygon points="751.0,34.0 757.0,42.0 765.0,36.0 766.0,34.0" fill="#b17b07" />
<path d="M726,460 Q728,454.300 734,454 Q743,454.800 747,460 Z" fill="#c80000"/>
<path d="M725.500,458.500 Q728,453.300 734,453 Q743.500,453.800 748,460" fill="none" stroke="#b45a05" stroke-width="1"/>
</g>
<g fill="none" stroke="#000" stroke-opacity="0.78" stroke-width="1.650" stroke-linejoin="round">
<polyline points="714.3,34.0 715.0,86.5 715.3,103.7 720.4,121.3 725.4,138.9 726.4,157.7 726.6,200.0 727.0,260.0 728.4,360.0 728.6,440.2 728.2,459.0"/>
<polyline points="731.9,34.0 732.5,66.0 734.5,101.7 738.0,120.3 745.0,136.5 745.0,155.7 745.2,200.0 745.6,260.0 746.6,360.0 746.8,459.0"/>
<polyline points="750.0,34.0 750.6,64.0 752.2,83.0 753.3,100.5 753.7,119.3 745.0,136.5"/>
<polyline points="767.4,34.0 767.8,57.9 768.2,76.5 768.8,94.2 768.8,110.4 768.2,127.4 762.8,144.0 762.8,160.7 763.8,179.9 764.0,200.0 764.4,260.0 765.4,360.0 765.7,459.0"/>
<polyline points="785.4,34.0 786.0,75.5 786.6,94.2 785.4,110.8 785.4,130.4 782.0,147.0 782.0,164.3 782.0,181.9 782.6,220.0 783.4,260.0 784.0,360.0 784.4,459.0"/>
<polyline points="803.6,34.0 804.2,93.6 804.2,130.4 801.2,147.6 801.2,183.3 801.8,260.0 802.6,360.0 803.0,459.0"/>
<polyline points="821.8,34.0 822.4,93.6 822.4,130.8 820.4,148.2 820.4,184.5 820.8,260.0 821.4,360.0 821.5,459.0"/>
<polyline points="839.7,39.0 785.4,40.3 767.4,41.2 750.0,45.6 731.9,46.5 714.3,48.6 696.0,50.2"/>
<polyline points="839.7,56.3 803.6,56.9 785.6,57.3 767.8,57.9 750.6,64.0 732.5,66.0 714.6,66.8 696.2,68.4"/>
<polyline points="839.7,74.8 786.0,75.5 768.2,76.5 752.2,83.0 733.4,84.0 715.0,85.5 696.4,87.6"/>
<polyline points="839.7,93.6 804.2,93.6 786.6,94.2 768.8,94.2 753.3,100.5 734.5,101.7 715.3,103.7 697.0,105.0"/>
<polyline points="839.7,111.4 804.2,111.2 785.4,110.8 768.8,110.4 753.3,100.5"/>
<polyline points="839.7,131.4 822.4,130.8 804.2,130.4 785.4,130.4 768.2,127.4 753.7,119.3 738.0,120.3 720.4,121.3 702.0,122.3"/>
<polyline points="839.7,148.6 820.4,148.2 801.2,147.6 782.0,147.0 762.8,144.0 745.0,136.5 725.4,138.9 707.2,139.5"/>
<polyline points="839.7,166.8 820.4,166.4 801.2,165.8 782.0,164.3 762.8,160.7 745.0,155.7 726.4,157.7 707.6,158.7"/>
<polyline points="707.8,176.8 726.5,176.8 745.1,176.5 763.8,179.5 782.0,182.1 801.2,183.8 820.4,184.8 839.7,185.3"/>
<polyline points="708.0,195.7 726.6,195.7 745.2,195.6 764.0,198.1 782.3,200.3 801.3,201.7 820.5,202.6 839.7,203.1"/>
<polyline points="708.2,213.9 726.7,214.0 745.3,214.0 764.1,216.4 782.6,218.5 801.5,219.9 820.6,220.8 839.7,221.3"/>
<polyline points="708.4,232.7 726.8,232.8 745.4,232.9 764.2,235.2 782.9,237.2 801.6,238.6 820.7,239.6 839.7,240.1"/>
<polyline points="708.7,251.3 726.9,251.5 745.5,251.7 764.4,253.8 783.3,255.6 801.8,256.9 820.8,257.8 839.7,258.3"/>
<polyline points="709.0,269.6 727.1,269.8 745.7,270.1 764.5,272.0 783.5,273.7 801.9,274.9 820.9,275.7 839.7,276.3"/>
<polyline points="709.3,287.9 727.4,288.1 745.9,288.5 764.7,290.3 783.6,291.8 802.1,293.0 821.0,293.8 839.7,294.4"/>
<polyline points="709.6,306.6 727.7,306.8 746.1,307.3 764.9,308.8 783.7,310.2 802.2,311.2 821.1,312.1 839.7,312.6"/>
<polyline points="709.9,325.2 727.9,325.5 746.3,326.0 765.1,327.5 783.8,328.8 802.4,329.8 821.2,330.6 839.7,331.2"/>
<polyline points="710.2,343.0 728.2,343.3 746.4,343.9 765.3,345.3 783.9,346.6 802.5,347.6 821.3,348.4 839.7,349.0"/>
<polyline points="710.5,360.9 728.5,361.6 746.6,363.1 765.4,364.6 784.0,365.7 802.6,366.6 821.4,367.2 839.7,367.5"/>
<polyline points="710.5,379.0 728.5,381.0 746.6,382.4 765.5,383.7 784.1,384.8 802.7,385.6 821.4,386.1 839.7,386.4"/>
<polyline points="710.5,398.0 728.5,401.0 746.7,401.9 765.5,402.8 784.2,403.4 802.8,404.0 821.4,404.3 839.7,404.5"/>
<polyline points="710.5,416.0 728.5,420.3 746.7,420.9 765.6,421.5 784.3,422.0 802.9,422.3 821.5,422.6 839.7,422.7"/>
<polyline points="710.5,434.8 728.5,440.2 746.8,440.7 765.6,441.1 784.3,441.5 802.9,441.8 821.5,442.0 839.7,442.1"/>
<polyline points="696.0,34.0 696.5,103.0 707.5,140.0 708.0,200.0 708.8,260.0 710.5,360.0 710.5,452.0 728.2,459.0 839.7,459.0 839.7,34.0"/>
</g></g></svg>
<div class="lgbar">
<i style="background:#ff0000"></i>
<i style="background:#ffb200"></i>
<i style="background:#ffff00"></i>
<i style="background:#b2ff00"></i>
<i style="background:#00ff00"></i>
<i style="background:#00ffb2"></i>
<i style="background:#00ffff"></i>
<i style="background:#00b2ff"></i>
<i style="background:#0000ff"></i>
</div>
<div class="tx " style="left:467.80px;top:182.28px;font-size:14.5px;color:#ffffff;transform:scaleX(1.0510);font-weight:bold">41.528 Max</div>
<div class="tx " style="left:468.60px;top:202.38px;font-size:14.5px;color:#dcdcdc;transform:scaleX(0.9130)">2.1889</div>
<div class="tx " style="left:468.60px;top:223.08px;font-size:14.5px;color:#dcdcdc;transform:scaleX(0.9313)">-37.15</div>
<div class="tx " style="left:468.60px;top:243.78px;font-size:14.5px;color:#dcdcdc;transform:scaleX(0.9454)">-76.489</div>
<div class="tx " style="left:468.60px;top:264.48px;font-size:14.5px;color:#dcdcdc;transform:scaleX(0.9458)">-115.83</div>
<div class="tx " style="left:468.60px;top:285.18px;font-size:14.5px;color:#dcdcdc;transform:scaleX(0.9433)">-155.17</div>
<div class="tx " style="left:468.60px;top:305.88px;font-size:14.5px;color:#dcdcdc;transform:scaleX(0.9250)">-194.51</div>
<div class="tx " style="left:468.60px;top:326.58px;font-size:14.5px;color:#dcdcdc;transform:scaleX(0.9433)">-233.85</div>
<div class="tx " style="left:468.60px;top:347.28px;font-size:14.5px;color:#dcdcdc;transform:scaleX(0.9433)">-273.19</div>
<div class="tx " style="left:467.80px;top:368.68px;font-size:14.5px;color:#ffffff;transform:scaleX(1.0387);font-weight:bold">-312.52 Min</div>
<div class="tx " style="left:-3.90px;top:4.78px;font-size:14.5px;color:#f2f2f2;transform:scaleX(1.0707)">Outline</div>
<div class="tx " style="left:21.80px;top:34.48px;font-size:14.5px;color:#f2f2f2;transform:scaleX(1.0210)">Name</div>
<div class="tx " style="left:148.00px;top:34.48px;font-size:14.5px;color:#6c6c6c;transform:scaleX(1.0039)">Search Outline</div>
<div class="tx " style="left:852.50px;top:8.08px;font-size:14.5px;color:#f2f2f2;transform:scaleX(0.9699)">Select</div>
<div class="tx " style="left:923.00px;top:8.08px;font-size:14.5px;color:#f2f2f2;transform:scaleX(1.0612)">Mode</div>
<div class="tx " style="left:437.30px;top:51.98px;font-size:14.5px;color:#ffffff;transform:scaleX(0.9959);font-weight:bold">B: Static Structural</div>
<div class="tx " style="left:437.40px;top:70.88px;font-size:14.5px;color:#dedede;transform:scaleX(1.0179)">Minimum Principal Stress</div>
<div class="tx " style="left:437.40px;top:89.48px;font-size:14.5px;color:#dedede;transform:scaleX(1.0140)">Type: Minimum Principal Stress</div>
<div class="tx " style="left:437.40px;top:108.18px;font-size:14.5px;color:#dedede;transform:scaleX(0.9973)">Unit: MPa</div>
<div class="tx " style="left:437.40px;top:126.58px;font-size:14.5px;color:#dedede;transform:scaleX(0.9426)">Time: 2 s</div>
<div class="tx " style="left:438.00px;top:145.28px;font-size:14.5px;color:#dedede;transform:scaleX(0.9711)">1/21/2025 9:51 PM</div>
</div></body></html>
